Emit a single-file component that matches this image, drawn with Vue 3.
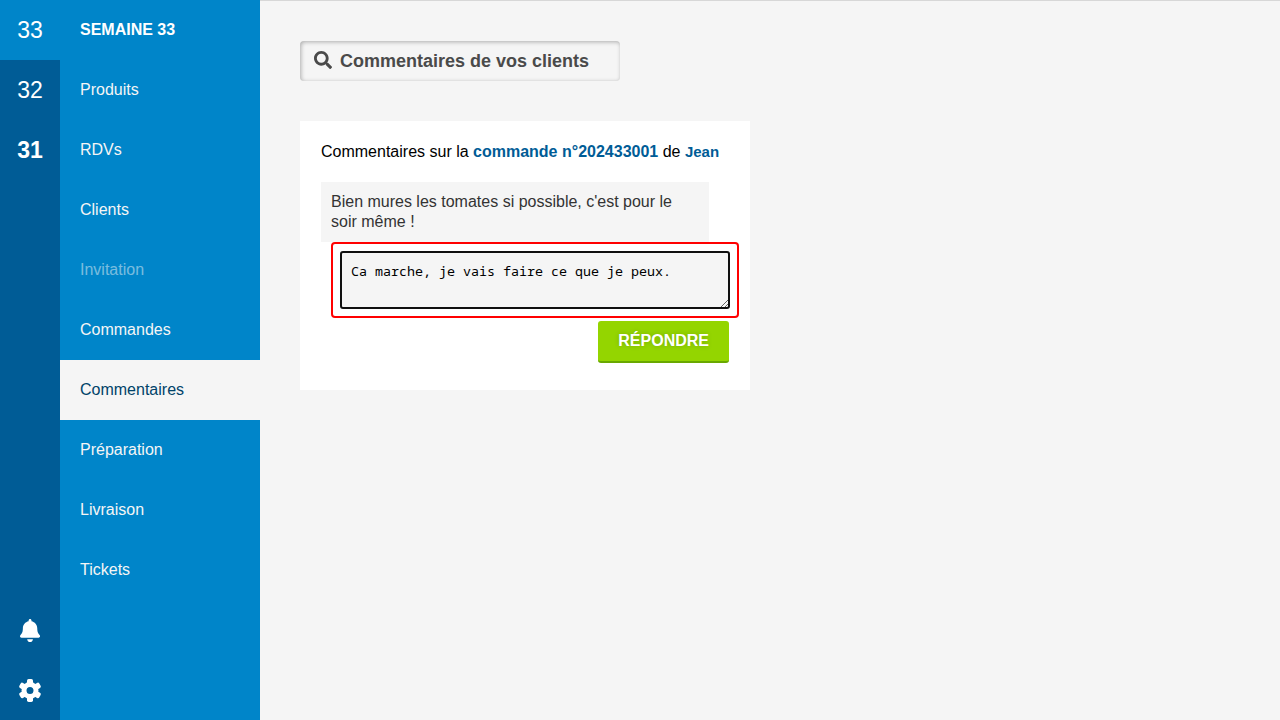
<script setup>
import { ref } from 'vue'

const weeks = [
  { number: 33, current: true },
  { number: 32 },
  { number: 31, strong: true },
]
const sections = [
  { label: 'Produits' },
  { label: 'RDVs' },
  { label: 'Clients' },
  { label: 'Invitation', muted: true },
  { label: 'Commandes' },
  { label: 'Commentaires', active: true },
  { label: 'Préparation' },
  { label: 'Livraison' },
  { label: 'Tickets' },
]
const search = ref('Commentaires de vos clients')
const reply = ref('Ca marche, je vais faire ce que je peux.')
</script>

<template>
  <div class="app">
    <nav class="weeks" aria-label="Semaines">
      <a
        v-for="week in weeks"
        :key="week.number"
        href="#"
        class="week"
        :class="{ current: week.current, strong: week.strong }"
      >{{ week.number }}</a>
      <div class="tools">
        <button type="button" class="tool" aria-label="Notifications">
          <svg class="bell-icon" viewBox="0 0 448 512" aria-hidden="true">
            <path d="M224 512c35.32 0 63.97-28.65 63.97-64H160.03c0 35.35 28.65 64 63.97 64zm215.39-149.71c-19.32-20.76-55.47-51.99-55.47-154.29 0-77.7-54.48-139.9-127.94-155.16V32c0-17.67-14.32-32-31.98-32s-31.98 14.33-31.98 32v20.84C118.56 68.1 64.08 130.3 64.08 208c0 102.3-36.15 133.53-55.47 154.29-6 6.45-8.66 14.16-8.61 21.71.11 16.4 12.98 32 32.1 32h383.8c19.12 0 32-15.6 32.1-32 .05-7.55-2.61-15.27-8.61-21.71z" />
          </svg>
        </button>
        <button type="button" class="tool" aria-label="Paramètres">
          <svg class="gear-icon" viewBox="-12 -12.4 24 24" aria-hidden="true">
            <rect x="-3" y="-11.5" width="6" height="7.5" rx="1.7" />
            <rect x="-3" y="-11.5" width="6" height="7.5" rx="1.7" transform="rotate(60)" />
            <rect x="-3" y="-11.5" width="6" height="7.5" rx="1.7" transform="rotate(120)" />
            <rect x="-3" y="-11.5" width="6" height="7.5" rx="1.7" transform="rotate(180)" />
            <rect x="-3" y="-11.5" width="6" height="7.5" rx="1.7" transform="rotate(240)" />
            <rect x="-3" y="-11.5" width="6" height="7.5" rx="1.7" transform="rotate(300)" />
            <circle class="gear-ring" r="6" />
          </svg>
        </button>
      </div>
    </nav>

    <nav class="menu" aria-label="Sections">
      <h2 class="menu-title">SEMAINE 33</h2>
      <a
        v-for="section in sections"
        :key="section.label"
        href="#"
        class="menu-link"
        :class="{ active: section.active, muted: section.muted }"
      >{{ section.label }}</a>
    </nav>

    <main class="content">
      <label class="search">
        <svg class="search-icon" viewBox="0 0 512 512" role="img" aria-label="Rechercher">
          <path d="M505 442.7L405.3 343c-4.5-4.5-10.6-7-17-7H372c27.6-35.3 44-79.7 44-128C416 93.1 322.9 0 208 0S0 93.1 0 208s93.1 208 208 208c48.3 0 92.7-16.4 128-44v16.3c0 6.4 2.5 12.5 7 17l99.7 99.7c9.4 9.4 24.6 9.4 33.9 0l28.3-28.3c9.4-9.4 9.4-24.6.1-34zM208 336c-70.7 0-128-57.2-128-128 0-70.7 57.2-128 128-128 70.7 0 128 57.2 128 128 0 70.7-57.2 128-128 128z" />
        </svg>
        <input v-model="search" type="text" class="search-input" />
      </label>

      <form class="card" @submit.prevent>
        <p class="card-title">
          Commentaires sur la <a href="#">commande n°202433001</a> de <a href="#" class="client">Jean</a>
        </p>
        <p class="comment">Bien mures les tomates si possible, c'est pour le soir même !</p>
        <div class="reply-frame">
          <textarea v-model="reply" class="reply" aria-label="Votre réponse" spellcheck="false"></textarea>
        </div>
        <button type="submit" class="submit">RÉPONDRE</button>
      </form>
    </main>
  </div>
</template>

<style>
body {
  margin: 0;
}
</style>

<style scoped>
.app {
  display: flex;
  min-height: 100vh;
  background: #f5f5f5;
  color: #000;
  font: 16px/20px "Liberation Sans", Arial, sans-serif;
}

.app *,
.app {
  box-sizing: border-box;
}

a {
  text-decoration: none;
}

.weeks {
  display: flex;
  flex: 0 0 60px;
  flex-direction: column;
  background: #005c96;
}

.week {
  color: #fff;
  font-size: 23px;
  line-height: 60px;
  text-align: center;
}

.week.current {
  background: #0085c9;
}

.week.strong {
  font-weight: bold;
}

.tools {
  display: flex;
  flex-direction: column;
  margin-top: auto;
}

.tool {
  display: flex;
  align-items: center;
  justify-content: center;
  height: 60px;
  padding: 0;
  border: 0;
  background: none;
  cursor: pointer;
}

.bell-icon {
  height: 23px;
  fill: #fff;
}

.gear-icon {
  height: 24px;
  fill: #fff;
}

.gear-ring {
  fill: none;
  stroke: #fff;
  stroke-width: 5;
}

.menu {
  flex: 0 0 200px;
  background: #0085c9;
}

.menu-title,
.menu-link {
  display: block;
  margin: 0;
  padding: 0 20px;
  color: #f5f5f5;
  font-size: 16px;
  line-height: 60px;
}

.menu-title {
  color: #fff;
}

.menu-link.muted {
  color: rgba(245, 245, 245, 0.5);
}

.menu-link.active {
  background: #f5f5f5;
  color: #004369;
}

.content {
  flex: 1;
  min-width: 0;
  padding: 40px;
  border-top: 1px solid #d7d7d7;
}

.search {
  display: flex;
  align-items: center;
  gap: 8px;
  max-width: 320px;
  height: 40px;
  padding: 0 14px;
  border-radius: 4px;
  box-shadow: inset 1px 1px 4px rgba(0, 0, 0, 0.3);
}

.search-icon {
  flex: none;
  width: 18px;
  height: 18px;
  margin-bottom: 2px;
  fill: #4a4a4a;
}

.search-input {
  flex: 1;
  min-width: 0;
  padding: 0;
  border: 0;
  outline: 0;
  background: none;
  color: #4a4a4a;
  font: bold 18px/20px "Liberation Sans", Arial, sans-serif;
}

.card {
  display: flex;
  flex-direction: column;
  max-width: 450px;
  margin-top: 40px;
  padding: 21px 21px 27px;
  background: #fff;
}

.card-title {
  margin: 0 0 20px;
}

.card-title a {
  color: #005c96;
  font-weight: bold;
}

.card-title .client {
  font-size: 15px;
}

.comment {
  margin: 0 20px 0 0;
  padding: 10px;
  background: #f5f5f5;
  color: #333;
}

.reply-frame {
  margin: 0 -10px 3px 10px;
  padding: 8px;
  border: 2px solid #f00;
  border-radius: 4px;
}

.reply {
  display: block;
  width: 100%;
  height: 56px;
  padding: 10px;
  border: 0;
  border-radius: 2px;
  outline: 2px solid #101010;
  outline-offset: -1px;
  background: #f5f5f5;
  color: #000;
  font-family: "Noto Sans Mono", monospace;
  line-height: 18px;
  resize: vertical;
}

.submit {
  align-self: flex-end;
  padding: 10px 20px;
  border: 0;
  border-bottom: 2px solid #69a800;
  border-radius: 3px;
  background: #94d500;
  color: #fff;
  font: bold 16px/20px "Liberation Sans", Arial, sans-serif;
  text-shadow: 0 0 5px rgba(0, 0, 0, 0.2);
  cursor: pointer;
}
</style>
